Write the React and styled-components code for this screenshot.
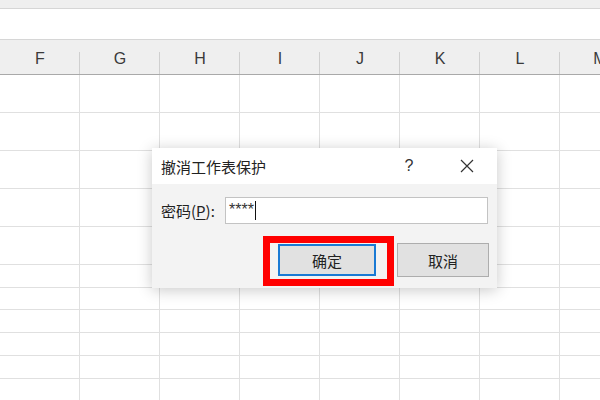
import React from 'react';
import styled, { createGlobalStyle } from 'styled-components';

const GlobalStyle = createGlobalStyle`
    html, body {
        margin:0;
        padding:0;
        background:#ffffff;
        overflow:hidden;
    }
    body {
        font-family: "Noto Sans CJK SC", "Noto Sans", sans-serif;
    }
`;

const Page = styled.div`
    position: relative;
    width:600px;
    height:400px;
    overflow:hidden;
    background:#ffffff;
`;

const TopBand = styled.div`
    height:8px;
    background:#efefef;
    border-bottom:1px solid #d6d6d6;
`;

const FormulaBar = styled.div`
    height:30px;
    background:#ffffff;
    border-bottom:1px solid #d6d6d6;
`;

const HeaderRow = styled.div`
    display:grid;
    grid-template-columns: repeat(8, 80px);
    height:34px;
    background:#efefef;
    border-bottom:1px solid #a9a9a9;
`;

const HeaderCell = styled.div`
    position: relative;
    display:flex;
    align-items: center;
    justify-content: center;
    padding-top:4px;
    font-family: "Liberation Sans", "Noto Sans", sans-serif;
    font-size:16px;
    color:#3a3a3a;
    &::after {
        content:"";
        position:absolute;
        right:0;
        bottom:0;
        width:1px;
        height:22px;
        background:#cfcfcf;
    }
`;

const Grid = styled.div`
    display:grid;
    grid-template-columns: repeat(8, 80px);
`;

const Cell = styled.div`
    height:${props => props.h - 1}px;
    border-right:1px solid #e0e0e0;
    border-bottom:1px solid #e0e0e0;
`;

const Dialog = styled.div`
    position:absolute;
    left:152px;
    top:148px;
    width:345px;
    height:140px;
    background:#f3f3f3;
    box-shadow: 0 2px 14px rgba(0,0,0,.22);
    display:flex;
    flex-direction: column;
`;

const TitleBar = styled.div`
    height:36px;
    background:#ffffff;
    display:flex;
    align-items: center;
    padding-left:9px;
    color:#222222;
    font-size:15px;
`;

const Title = styled.span`
    flex:1;
`;

const Help = styled.span`
    width:20px;
    text-align:center;
    margin-right:38px;
    font-family: "Liberation Sans", sans-serif;
    font-size:16px;
    color:#333333;
`;

const Close = styled.span`
    display:flex;
    align-items:center;
    justify-content:center;
    width:20px;
    margin-right:20px;
`;

const Body = styled.div`
    flex:1;
    display:flex;
    flex-direction: column;
    padding:13px 8px 0 9px;
`;

const Field = styled.div`
    display:flex;
    align-items:center;
    height:27px;
`;

const Label = styled.label`
    width:64px;
    font-size:15px;
    color:#222222;
    u {
        text-decoration: underline;
        text-underline-offset: 2px;
    }
`;

const Input = styled.div`
    box-sizing:border-box;
    width:263px;
    height:27px;
    background:#ffffff;
    border:1px solid #c3c3c3;
    display:flex;
    align-items:flex-start;
    padding:3px 0 0 3px;
    font-family: "Liberation Sans", sans-serif;
    font-size:16px;
    line-height:18px;
    color:#333333;
`;

const Caret = styled.span`
    width:1px;
    height:19px;
    margin-left:1px;
    background:#111111;
`;

const Buttons = styled.div`
    display:flex;
    align-items:center;
    justify-content:flex-end;
    gap:21px;
    margin-top:19px;
`;

const Button = styled.div`
    box-sizing:border-box;
    width:${props => props.w}px;
    height:${props => props.primary ? 32 : 34}px;
    display:flex;
    align-items:center;
    justify-content:center;
    background:#e1e1e1;
    border:${props => props.primary ? '2px solid #1a7ad4' : '1px solid #adadad'};
    font-size:15px;
    color:#222222;
`;

const Highlight = styled.div`
    position:absolute;
    left:263px;
    top:236px;
    width:131px;
    height:50px;
    box-sizing:border-box;
    border:7px solid #ff0000;
    pointer-events:none;
`;

const columns = ['F', 'G', 'H', 'I', 'J', 'K', 'L', 'M'];
const rowHeights = [38, 38, 38, 38, 38, 23, 22, 23, 23, 23, 23];

function App() {
    return (
        <Page>
            <GlobalStyle />
            <TopBand />
            <FormulaBar />
            <HeaderRow>
                {columns.map(c => <HeaderCell key={c}>{c}</HeaderCell>)}
            </HeaderRow>
            <Grid>
                {rowHeights.map((h, r) =>
                    columns.map(c => <Cell key={c + r} h={h} />)
                )}
            </Grid>
            <Dialog>
                <TitleBar>
                    <Title>撤消工作表保护</Title>
                    <Help>?</Help>
                    <Close>
                        <svg width="14" height="14" viewBox="0 0 14 14">
                            <path d="M1 1 L13 13 M13 1 L1 13" stroke="#333" strokeWidth="1.2" fill="none" />
                        </svg>
                    </Close>
                </TitleBar>
                <Body>
                    <Field>
                        <Label>密码(<u>P</u>):</Label>
                        <Input>
                            ****
                            <Caret />
                        </Input>
                    </Field>
                    <Buttons>
                        <Button primary w={98}>确定</Button>
                        <Button w={92}>取消</Button>
                    </Buttons>
                </Body>
            </Dialog>
            <Highlight />
        </Page>
    );
}

export default App;
